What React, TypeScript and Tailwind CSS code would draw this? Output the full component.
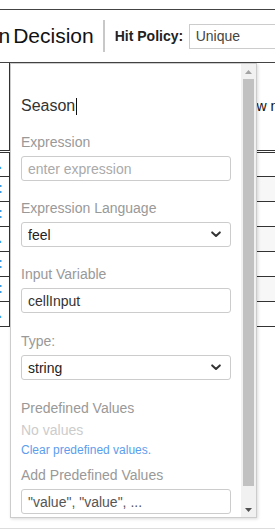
import React from "react";

const Chevron = () => (
  <svg width="10" height="7" viewBox="0 0 10 7" className="shrink-0">
    <path d="M1.2 1.4 L5 5 L8.8 1.4" fill="none" stroke="#333" strokeWidth="2" strokeLinecap="round" strokeLinejoin="round" />
  </svg>
);

const Label = ({ children, className = "" }: { children: React.ReactNode; className?: string }) => (
  <div className={"h-[20px] text-[14px] leading-[20px] text-[#999] " + className}>{children}</div>
);

const Box = ({ children, select = false, className = "" }: { children: React.ReactNode; select?: boolean; className?: string }) => (
  <div
    className={
      "mt-[4px] h-[25px] w-full rounded-[3px] border border-[#ccc] flex items-center justify-between pl-[6px] pr-[9px] text-[14px] leading-[20px] bg-white " +
      className
    }
  >
    <span>{children}</span>
    {select && <Chevron />}
  </div>
);

const rows = [
  { h: "h-[24px]", gray: false, mark: "." },
  { h: "h-[25px]", gray: true, mark: ":" },
  { h: "h-[25px]", gray: false, mark: ":" },
  { h: "h-[25px]", gray: true, mark: "." },
  { h: "h-[25px]", gray: false, mark: ":" },
  { h: "h-[25px]", gray: true, mark: ":" },
  { h: "h-[25px]", gray: false, mark: "." },
];

export default function App() {
  return (
    <div className="relative w-[275px] h-[532px] overflow-hidden bg-white font-['Liberation_Sans',Arial,sans-serif] text-[#222]">
      <div className="h-[9px]" />
      <div className="border-t border-[#444]" />
      <header className="h-[53px] flex items-center border-b border-[#444] whitespace-nowrap">
        <span className="ml-[-1.5px] text-[21px] leading-[28px] text-[#111]">n</span>
        <span className="ml-[3px] text-[21px] leading-[28px] text-[#111]">Decision</span>
        <div className="ml-[9px] w-[2px] h-[32px] bg-[#c8c8c8] shrink-0" />
        <span className="ml-[10px] text-[14px] font-bold text-[#222]">Hit Policy:</span>
        <div className="ml-[5.5px] h-[25px] w-[120px] shrink-0 border border-[#ccc] flex items-center pl-[6px] text-[14px] text-[#444]">
          Unique
        </div>
      </header>

      <div>
        <div className="flex h-[90px] border-b-[3px] border-double border-[#333]">
          <div className="w-[10px] shrink-0 border-r border-[#333]" />
          <div className="flex-1 overflow-hidden whitespace-nowrap pl-[246.5px] pt-[33px] text-[14px] leading-[20px] text-[#111]">
            w n
          </div>
        </div>
        {rows.map((r, i) => (
          <div key={i} className={"flex border-b border-[#333] " + r.h}>
            <div className="w-[10px] shrink-0 border-r border-[#333] overflow-hidden">
              <span className="block ml-[-2px] text-[14px] leading-[22px] font-bold text-[#3b9ae1]">{r.mark}</span>
            </div>
            <div className={"flex-1 " + (r.gray ? "bg-[#f7f7f7]" : "bg-white")} />
          </div>
        ))}
        <div className="h-[201px]" />
        <div className="border-t border-[#ddd]" />
      </div>

      <div className="absolute left-[10px] top-[63px] w-[247px] h-[455px] border border-[#ccc] bg-white shadow-[1px_1px_3px_rgba(0,0,0,0.15)] flex">
        <div className="w-[230px] h-full overflow-hidden">
          <div className="px-[10px] pt-[30px] pb-[19px]">
            <div className="h-[24px] text-[16px] leading-[24px] text-[#333] flex items-center">
              <span>Season</span>
              <span className="inline-block w-[1px] h-[17px] bg-[#111] ml-[1px]" />
            </div>

            <Label className="mt-[14px]">Expression</Label>
            <Box className="text-[#aaa]">enter expression</Box>

            <Label className="mt-[17px]">Expression Language</Label>
            <Box select className="text-[#222]">feel</Box>

            <Label className="mt-[17px]">Input Variable</Label>
            <Box className="text-[#333]">cellInput</Box>

            <Label className="mt-[18px]">Type:</Label>
            <Box select className="text-[#222]">string</Box>

            <Label className="mt-[18px]">Predefined Values</Label>
            <div className="mt-[2px] h-[20px] text-[14px] leading-[20px] text-[#ccc]">No values</div>
            <div className="mt-[2px] h-[16px] text-[12px] leading-[16px] text-[#5c9ded]">Clear predefined values.</div>

            <Label className="mt-[7px]">Add Predefined Values</Label>
            <Box className="text-[#555]">"value", "value", ...</Box>
          </div>
        </div>
        <div className="w-[15px] h-full bg-[#f1f1f1] flex flex-col">
          <div className="h-[15px] flex items-center justify-center">
            <svg width="7" height="4" viewBox="0 0 7 4">
              <path d="M3.5 0 L7 4 L0 4 Z" fill="#a3a3a3" />
            </svg>
          </div>
          <div className="flex-1 flex flex-col">
            <div className="mx-[2px] h-[407px] bg-[#c1c1c1]" />
          </div>
          <div className="h-[15px] flex items-center justify-center">
            <svg width="7" height="4" viewBox="0 0 7 4">
              <path d="M0 0 L7 0 L3.5 4 Z" fill="#505050" />
            </svg>
          </div>
        </div>
      </div>
    </div>
  );
}
